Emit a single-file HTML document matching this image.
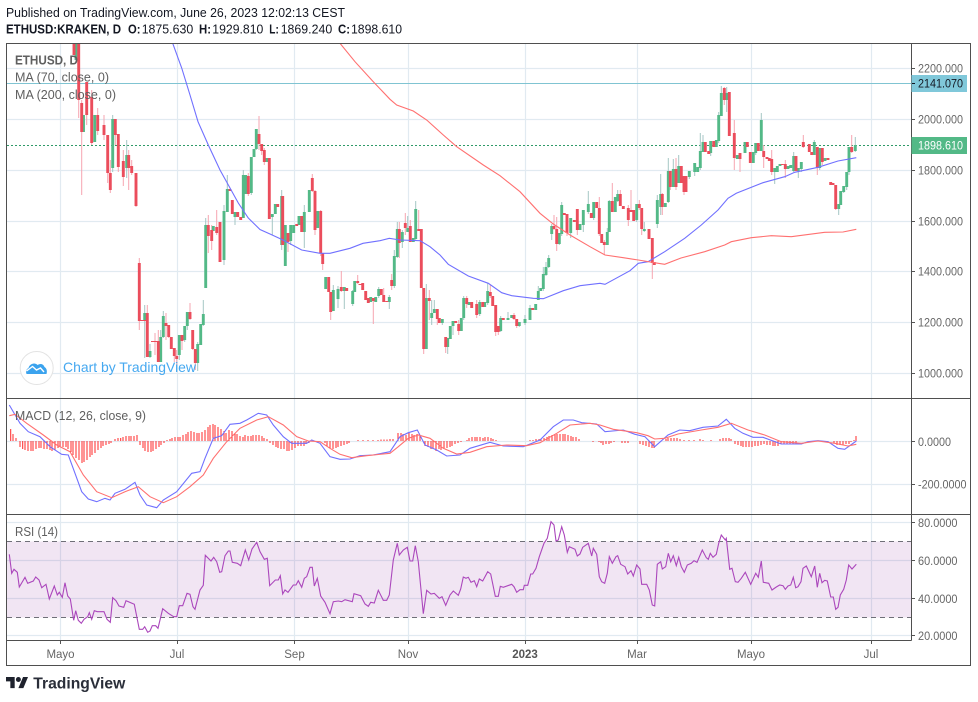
<!DOCTYPE html>
<html><head><meta charset="utf-8"><style>html,body{margin:0;padding:0;background:#fff}svg{display:block}text{font-family:"Liberation Sans",sans-serif}</style></head><body>
<svg width="978" height="702" viewBox="0 0 978 702" xmlns="http://www.w3.org/2000/svg">
<defs>
<clipPath id="p"><rect x="7" y="44" width="904" height="354"/></clipPath>
<clipPath id="m"><rect x="7" y="399" width="904" height="115"/></clipPath>
<clipPath id="r"><rect x="7" y="515" width="904" height="125"/></clipPath>
<clipPath id="a"><rect x="912" y="515" width="58" height="125"/></clipPath>
</defs>
<rect width="978" height="702" fill="#fff"/>
<text x="6" y="17" font-size="12.5" fill="#131722" textLength="339" lengthAdjust="spacingAndGlyphs">Published on TradingView.com, June 26, 2023 12:02:13 CEST</text>
<g font-size="12.5" fill="#131722">
<text x="6" y="33.5" font-weight="bold" textLength="115" lengthAdjust="spacingAndGlyphs">ETHUSD:KRAKEN, D</text>
<text x="128" y="33.5" font-weight="bold" textLength="12.5" lengthAdjust="spacingAndGlyphs">O:</text>
<text x="141.7" y="33.5" textLength="51.5" lengthAdjust="spacingAndGlyphs">1875.630</text>
<text x="199" y="33.5" font-weight="bold" textLength="12" lengthAdjust="spacingAndGlyphs">H:</text>
<text x="212.3" y="33.5" textLength="51" lengthAdjust="spacingAndGlyphs">1929.810</text>
<text x="269.3" y="33.5" font-weight="bold" textLength="9.5" lengthAdjust="spacingAndGlyphs">L:</text>
<text x="280.7" y="33.5" textLength="51.5" lengthAdjust="spacingAndGlyphs">1869.240</text>
<text x="338" y="33.5" font-weight="bold" textLength="12" lengthAdjust="spacingAndGlyphs">C:</text>
<text x="351" y="33.5" textLength="51" lengthAdjust="spacingAndGlyphs">1898.610</text>
</g>
<!-- grids -->
<path d="M60.5 44V640M177.5 44V640M294.5 44V640M408.5 44V640M525.5 44V640M637.5 44V640M751.5 44V640M871.5 44V640" stroke="#e1eaf1" stroke-width="1.2" fill="none"/>
<path d="M7 68.5H911M7 119.5H911M7 170.5H911M7 221.5H911M7 271.5H911M7 322.5H911M7 373.5H911M7 441.5H911M7 484.5H911M7 522.5H911M7 560.5H911M7 598.5H911M7 635.5H911" stroke="#e1eaf1" stroke-width="1.2" fill="none"/>
<path d="M7 83.5H911" stroke="#80c4d2" stroke-width="1"/>
<path d="M7 145.5H911" stroke="#2f9a68" stroke-width="1" stroke-dasharray="2 2"/>
<g clip-path="url(#p)" fill="none">
<path stroke="#a5c6c4" stroke-width="1" d="M112.7 115V172M126.7 140V178M144.7 305V358M150 344V358M160.7 330V362M163.3 311V338M179.3 335V360M184.7 326V342M187.3 312V330M197.7 342V371M200.7 324V345M203.3 300V326M205.7 218V288M224 205V265M227.3 175V212M235 212V225M243.3 170V218M251.3 157V195M256.3 129V150M272.3 214V235M281.7 190V250M285.3 225V266M290.7 225V245M304.3 205V248M309.3 190V212M333.3 285V311M338 286V308M344.3 287V309M352.7 290V306M378.7 287V298M389.3 295V309M394.3 250V288M397.3 222V258M402.3 230V248M407.7 216V230M415.7 201V240M426.3 284V349M431.7 300V325M434.3 300V313M442.3 319V325M447.7 338V354M453 321V335M463.7 296V320M479.7 300V316M487.7 283V305M500.7 316V332M508 312V320M519.3 322V327M525 315V325M530 305V320M538.3 286V300M543.3 267V291M546 262V276M548.7 255V268M551.7 224V240M559.3 233V245M561.7 202V236M570.7 218V238M583.3 210V232M588.3 191V214M593.7 202V220M607.3 228V245M609.3 200V232M615.3 197V212M617.7 190V202M636.7 204V222M644.3 222V232M657.3 195V228M660.7 174V215M668.3 158V203M673.3 159V187M678.7 155V183M689.3 171V179M694.7 163V176M700.3 133V170M703 135V152M710.7 141V156M718.7 112V143M721.3 86V116M726.7 87V112M755.7 143V155M761.3 113V151M774.7 168V184M793.7 152V172M798.3 171V178M801.3 162V172M814.3 140V155M819.7 148V170M838.7 204V215M840.7 191V205M843.7 186V193M846.7 172V190M849 147V175M855.3 137V152"/>
<path stroke="#f6a5b0" stroke-width="1" d="M78.7 60V118M81.7 100V195M86.7 82V125M91.7 90V145M97.7 108V135M104 115V140M107.7 135V183M110.3 160V193M115.3 119V145M118.3 134V172M123.3 150V186M128.7 150V190M131.7 160V175M136 173V207M139.3 258V330M147.3 305V357M155 333V355M158.3 330V362M166 313V340M168.7 325V338M174.3 348V362M176.7 350V365M182 335V350M190 303V320M192.7 330V350M195.3 349V370M208.3 215V253M211.7 225V250M216.7 210V235M220 222V262M248.3 173V196M259 116V150M261.7 144V155M264.3 148V165M269.3 158V219M288 233V252M301.7 216V230M312.3 174V192M315 190V235M320.7 210V256M322.7 253V270M330.7 292V320M341.3 271V292M357.7 275V284M373.3 298V324M383.7 288V302M391.7 274V290M399.3 222V258M405.3 213V235M410.3 220V242M418.7 210V230M421.3 229V288M423.7 288V354M429.3 290V320M437.3 309V325M445.7 337V353M458.7 320V335M466.7 296V308M476.7 300V318M490.3 285V298M495.7 305V336M498.3 326V335M514 313V320M516.7 319V328M554 215V230M556.7 217V251M567 214V236M577.3 209V235M599.3 197V236M604.3 240V255M612.3 183V212M620.3 190V206M628.3 205V226M631 190V212M639.3 200V210M641.7 208V235M649 229V239M652.3 238V279M662.3 193V215M670.3 171V190M676 158V190M684 176V195M724.3 87V105M729.3 92V136M734.3 120V170M740 153V172M763.7 145V168M771.7 150V175M785.3 160V178M803.3 135V148M817.3 147V175M822.3 148V165M835.7 185V210M851.7 135V153"/>
<path stroke="#53b987" stroke-width="2.9" d="M76 43V60M83.5 115V132M94.7 115V142M112.7 119V168M126.7 155V168M144.7 313V321M150 351V357M160.7 337V362M163.3 316V337M179.3 335V355M184.7 326V340M187.3 312V326M197.7 344V363M200.7 324V345M203.3 314V325M205.7 225V288M213.3 226V231M224 211V260M227.3 189V212M235 212V217M243.3 175V218M245.7 175V194M251.3 157V193M254 149V157M256.3 129V149M266.7 158V162M272.3 214V217M275.3 204V214M281.7 196V245M285.3 225V266M290.7 225V241M293.7 225V233M299 216V225M304.3 212V232M309.3 190V212M317.7 211V228M325.7 277V289M333.3 290V311M338 289V299M344.3 287V291M352.7 291V304M354.7 281V292M370.7 297V302M375.7 297V302M378.7 289V296M389.3 297V302M394.3 256V286M397.3 229V257M402.3 232V242M407.7 228V232M413.3 238V242M415.7 209V239M426.3 298V349M431.7 313V318M434.3 309V313M442.3 319V323M447.7 338V347M450.3 326V339M453 321V326M461.3 318V331M463.7 298V318M469 302V305M479.7 302V314M484.7 302V307M487.7 291V303M500.7 318V331M508 318V320M511.7 315V318M519.3 322V326M525 319V323M530 308V320M535.7 304V310M538.3 291V300M540.7 288V291M543.3 274V289M546 267V275M548.7 258V267M551.7 226V234M559.3 233V244M561.7 205V234M570.7 218V233M580 224V230M583.3 210V225M588.3 204V212M593.7 202V218M607.3 232V245M609.3 201V232M615.3 197V212M617.7 194V201M636.7 204V220M644.3 229V231M657.3 200V224M660.7 194V207M665.3 203V207M668.3 171V202M673.3 169V187M678.7 166V183M689.3 171V177M694.7 163V172M697.7 167V172M700.3 151V168M703 142V152M710.7 141V153M716.3 140V147M718.7 115V141M721.3 93V116M726.7 93V100M737.3 155V159M745 142V153M753.3 152V163M755.7 143V153M761.3 120V151M774.7 168V172M777.3 166V172M780 164V166M788 166V169M790.7 165V168M793.7 156V171M798.3 168V171M801.3 162V169M814.3 142V155M819.7 148V168M825 158V161M838.7 204V209M840.7 191V205M843.7 186V192M846.7 172V187M849 147V172M855.3 145V151"/>
<path stroke="#eb4d5c" stroke-width="2.9" d="M74 43V55M78.7 43V100M81.7 103V132M86.7 82V115M91.7 97V143M97.7 115V131M104 125V135M107.7 135V173M110.3 173V190M115.3 119V135M118.3 134V167M123.3 161V177M128.7 155V168M131.7 166V173M136 173V206M139.3 263V321M147.3 313V357M158.3 341V362M166 323V326M168.7 325V337M171.3 337V349M174.3 348V356M176.7 356V359M182 335V341M190 312V319M192.7 330V349M195.3 349V363M208.3 225V236M211.7 230V241M216.7 227V233M220 222V262M230 189V191M232.3 200V214M237.7 212V217M240.7 217V220M248.3 176V194M259 134V144M261.7 144V151M264.3 150V162M269.3 158V219M277.7 204V207M282.7 196V245M288 233V242M296.7 224V226M301.7 216V232M312.3 178V191M315 191V230M320.7 211V253M322.7 253V264M328.7 277V292M330.7 292V312M341.3 287V291M346.7 288V291M357.7 281V283M360 284V285M362.7 283V290M365.7 291V300M368.3 298V303M373.3 298V301M381.3 289V295M383.7 295V302M386.7 301V302M391.7 280V286M399.3 229V243M405.3 223V228M410.3 226V242M418.7 229V231M421.3 229V288M423.7 288V349M429.3 298V301M437.3 309V319M439.3 318V323M445.7 337V347M455.7 321V323M458.7 324V331M466.7 298V304M471.7 302V308M476.7 304V315M482.7 302V307M490.3 292V296M492.7 296V306M495.7 305V332M498.3 326V332M503.3 318V320M514 315V319M516.7 319V326M532.7 308V310M554 226V229M556.7 229V244M564.3 213V215M567 214V233M574.3 220V222M577.3 209V230M591.3 213V218M596.7 202V208M599.3 208V234M601.7 234V243M604.3 242V245M612.3 201V212M620.3 194V206M623.3 206V209M628.3 208V220M631 210V212M633.7 210V221M639.3 204V208M641.7 208V229M649 229V239M652.3 238V263M654.3 262V265M662.3 194V207M670.3 171V187M676 169V187M681.3 166V183M684 176V192M686 176V192M705.3 142V152M708.7 151V154M713.7 141V147M724.3 88V100M729.3 92V136M734.3 133V158M740 153V159M747.3 142V147M750.3 152V163M758.3 143V151M763.7 151V157M767 157V159M769.3 158V161M771.7 159V172M782.3 164V165M785.3 164V169M796 156V171M803.3 142V147M809.3 144V152M811.7 152V155M817.3 147V168M822.3 148V162M828 158V160M830.7 182V185M833 183V185M835.7 185V209M851.7 147V152"/>
<path stroke="#eb4d5c" stroke-width="1" d="M139 320.5H146M151 341.5H158"/>
<polyline stroke="#7070ff" stroke-width="1.1" points="172.7,43.3 181.7,68 190,95 198,121.7 208.3,145 220,170 230,188 238.3,203 248.3,218 260,229.5 270,234 283,240 301.7,250 320,253.3 330,253.3 350,248.3 363,243.3 380,240.7 389.3,238.3 400,240 420,240.7 430,246.7 440,255 448.3,264.3 468.3,276 488.3,283.3 501.7,292.7 511.7,295.7 533.3,298.3 543.3,298.7 563.3,290.7 580,285.7 600,283.3 605,284.3 630,270.7 638.3,263.3 648,261.7 664.7,251.7 684.7,238.3 701.3,225 718,210 728,198.3 736.3,193.3 763,182.7 784.7,176.7 794.7,172.3 818,167.3 838,161 856.3,157.7"/>
<polyline stroke="#ff7070" stroke-width="1.1" points="340,43.3 355,61.7 373.3,81.7 390,99.3 396.7,105 413.3,111 426.7,120 443.3,135 456.7,146.7 483.3,165 500,175.7 520,191.7 540,213.3 553.3,224 570,235 590,246.7 605,255 623.3,257.7 638.3,260 658.3,263.3 664.7,264.3 681,258 704.7,251.7 724.7,245 731.3,241.7 751.3,237.7 771.3,235.7 791.3,236.7 824.7,232.3 843,232 856.3,229.3"/>
</g>
<g clip-path="url(#m)" fill="none">
<path stroke="#ff2a2a" stroke-width="1" d="M10.7 441V429M13 441V434M16 441V438M20 441V447M22.7 441V449M25 441V450M28 441V451M31 441V451M33 441V451M36 441V449M39 441V448M41 441V448M44 441V449M47 441V449M50 441V450M52 441V451M55 441V450M58 441V448M60 441V447M63 441V447M66 441V447M68 441V449M71 441V452M73 441V455M76 441V458M79 441V460M82 441V463M84 441V462M87 441V460M90 441V457M92 441V455M95 441V453M98 441V450M101 441V448M103 441V446M106 441V445M109 441V444M111 441V443M115 441V439M118 441V438M120.7 441V438M123 441V437M126 441V436M129 441V436M131 441V436M134 441V436M137 441V435M140 441V445M143 441V448M145 441V451M148 441V452M151 441V452M153 441V451M156 441V449M159 441V447M161 441V445M164 441V443M167 441V440M170 441V439M172 441V438M175 441V437M178 441V437M180 441V437M183 441V435M186 441V434M188 441V432M191 441V431M194 441V432M197 441V433M199 441V433M202 441V432M205 441V430M208 441V427M210 441V425M213 441V424M215 441V425M218 441V427M221 441V429M224 441V431M226 441V433M229 441V430M232 441V431M235 441V433M237 441V434M240 441V436M243 441V437M245 441V435M248 441V436M251 441V436M253 441V435M256 441V435M259 441V435M262 441V436M264 441V438M267 441V439M270 441V443M273 441V445M276 441V447M278 441V448M281 441V449M284 441V449M287 441V451M289 441V451M292 441V450M295 441V448M298 441V446M301 441V446M304 441V446M306 441V444M309 441V443M325 441V443M327 441V446M330 441V448M333 441V449M336 441V448M338 441V447M341 441V446M344 441V445M347 441V444M349 441V443M358 441V440M363 441V440M368 441V440M373 441V440M378 441V440M381 441V439.5M384 441V439.5M387 441V439.5M390 441V439M393 441V439M398 441V433M401 441V433M403 441V434M406 441V435M409 441V433M412 441V434M414 441V435M417 441V434M420 441V436M425 441V446M428 441V447M431 441V449M433 441V449M436 441V451M439 441V449M441 441V450M444 441V449M447 441V448M450 441V447M452 441V446M455 441V444M458 441V443M461 441V442M467 441V440M469 441V438M472 441V437M475 441V437M477 441V437M480 441V437M483 441V438M485 441V437M488 441V437M491 441V438M493 441V439M496 441V440M530 441V440M533 441V440M536 441V439M539 441V439M541 441V439M544 441V438M547 441V437M549 441V436M552 441V435M555 441V434M557 441V434M560 441V434M563 441V434M565 441V434M568 441V435M571 441V436M573 441V437M576 441V437M579 441V439M593 441V442M599 441V442M601 441V443M603 441V445M606 441V444M609 441V444M611 441V443M614 441V442M622 441V443M625 441V443M628 441V443M640 441V444M643 441V445M646 441V446M649 441V447M652 441V448M654 441V448M666 441V439M668 441V438M671 441V438M674 441V438M677 441V438M680 441V439M684 441V440M689 441V440M694 441V440M700 441V439M703 441V440M711 441V440M720 441V439M723 441V438M726 441V438M729 441V438M731 441V439M735 441V444M738 441V445M741 441V446M743 441V447M746 441V447M749 441V447M752 441V447M755 441V446M758 441V446M761 441V445M764 441V444M767 441V445M770 441V445M773 441V446M775 441V446M778 441V446M781 441V444M784 441V444M787 441V444M790 441V444M793 441V444M796 441V444M834 441V443M837 441V445M840 441V445M843 441V445M846 441V444M849 441V444M851 441V442M854 441V440M856 441V436"/>
<polyline stroke="#7070ff" stroke-width="1.1" points="9.3,405 20,423.3 28.3,431.7 40,436.7 50,446.7 61.7,454.3 68.3,455 75,473.3 81.7,491.7 88.3,499 96.7,501.7 105,498.3 110,500 115,493.3 125,489.3 135,482.3 140,495 146.7,505 156.7,507.7 163.3,500 176.7,491.7 191.7,473.3 200,471.7 205,458.3 213.3,438.3 221.7,435.7 230,424.3 240,423.3 246.7,420 258.3,413.3 266.7,415 273.3,425 283.3,436.7 291.7,443.3 306.7,443.3 311.7,440 320,443.3 330,456.7 340,459.3 350,459 360,455.7 373,455 390,451.7 400,436.7 408.3,432.7 417.3,430 425,445 436.7,450 446.7,456 460,455 470,448.3 490,442.3 503.3,446 523.3,446.7 540,440 553.3,426.7 563.3,420 573.3,420 581.7,422.7 596.7,424 605,431.7 623.3,430 635,434.3 645,436.7 654.7,446.7 668,435 679.7,430 689.7,430.7 703,427.3 718,426 726.3,419.3 734.7,428.3 743,433.3 753,437.3 763,437.3 781.3,444 801.3,444 808,441.7 818,440.7 828,441.7 838,448.3 844.7,449.3 856.3,441"/>
<polyline stroke="#ff7070" stroke-width="1.1" points="9.3,415.7 15,414.3 26.7,423.3 43.3,435 56.7,445 70,451.7 83.3,475 96.7,491.7 111.7,497.7 125,491.7 138.3,486.7 150,496.7 163.3,502.7 176.7,496.7 190,486.7 203.3,475 213.3,458.3 226.7,441.7 240,428.3 256.7,420 268.3,416.7 283.3,425 296.7,436.7 308.3,441 320,441.7 330,448.3 340,454.3 351.7,457.7 366.7,455.7 390,453.3 398.3,446.7 408.3,438.3 418.3,435 430,438.3 443.3,448.3 456.7,454 470,452.3 486.7,446.7 506.7,445 526.7,445.7 540,442.7 556.7,433.3 570,425 590,423.3 600,425 613.3,429.3 636.7,432.7 648,435.7 654.7,439 664.7,438.3 678,434 701.3,430 718,427.3 731.3,423.3 748,430 764.7,435 781.3,441.7 801.3,443.3 818,441 834.7,443.3 848,446 856.3,444.3"/>
</g>
<g clip-path="url(#r)" fill="none">
<rect x="7" y="541.5" width="904" height="76" fill="#8e2a9e" opacity="0.12"/>
<path d="M7 541.5H911M7 617.5H911" stroke="#6f6f78" stroke-width="1" stroke-dasharray="5 4"/>
<polyline stroke="#ab47bc" stroke-width="1.1" points="9.3,554.3 11.7,573.3 14,569.3 17.3,572.3 19.3,587 25,577.3 27.7,583.3 33.3,581 35.7,577 39,580 41.7,587.7 46,584.3 49.3,599 54.3,586 57.3,595 59.3,592.3 62.3,597.3 65,582.7 67.7,596 70.3,599 73.7,620.3 75.7,610.7 78.3,620.3 81.3,623.3 84,619.3 87.7,616.7 89.3,612.7 91.7,619.3 94.3,610.7 97.3,611.7 104,611.7 107,619.3 110.3,622.3 112.7,597.7 116,600.7 119,606 123.7,607.3 126,600.7 134.3,604.3 139.3,629.3 142.7,629.3 144.7,626.7 147.7,632.3 150,631 152.3,625.7 155.7,625.7 158,628.3 162.7,608.7 168.3,613.3 173.7,616.7 176.7,616.7 179.3,605.7 182.7,605.7 187,593.3 190,594.3 193,606.7 195,609.3 200,590 203.3,585.3 205.3,555.3 211,561 213.7,557.3 216.7,561.7 219.7,572.3 221.7,571.7 225,555.7 228.3,551 230,551 232.3,562.3 237.3,563.3 240.7,565.7 245.3,550 248.7,560 252,549 256.7,542.3 260,551.7 264.3,559.3 267.3,558.3 269.7,585.7 275.3,580 278.3,580 280.3,575.7 282.7,594 285,590 288,592.3 293.3,585 296,585 298.3,580.7 301.7,587.3 304.3,578.3 306.7,576.7 310,567.3 312.3,567.3 314.3,586 317.3,578.3 320.7,596 325,602.3 330,613.7 333.3,601.7 338.3,601 341.7,601.7 345,599.7 352.3,601.7 354,593.7 360.7,595.7 365,604 368.3,606.3 370.7,602.3 374.3,603 378.3,590.3 383.3,600.3 386.7,600.3 389.3,595 393.3,560 397.3,543.3 399.3,555 403.3,550 407.3,547.3 410,561 412.7,561 415.3,545.7 418.3,561.7 423.3,613.7 426.7,590.3 431,594 434.3,593.3 439.3,598.3 442,596.7 445.7,605.3 450,595 453.3,591 458.3,595.3 460.7,589 463.3,577 466,578.3 468.3,577.3 471,582.3 474.3,580.7 476.7,586.7 479.3,579 482.7,581 487.7,571.7 490.7,574 495.3,596.3 498.3,596.3 500.3,586.3 503.3,587.3 511.7,584.3 514,586.7 516.7,592.3 520,589.7 523.3,589.7 524.3,585.3 527.7,585.3 530.7,574 532.7,574 536,568.3 539.3,556.7 544,543.3 547.3,538.3 551,521.7 554,525 556,541 558.3,540 561.7,526.7 564.3,535 567.3,552.3 569.3,546.7 575,549.3 577.3,556 580,554 582.7,547.3 588.3,543.3 591.7,556 593.3,548.3 596.7,554.3 599.3,576.7 601.7,581.7 604.7,583.3 607.3,573.3 609.3,556.7 612.3,563.3 616,556.7 617.7,555.7 620.7,564.3 625,566.7 627.7,574 631,570.7 633.3,576 636.7,565 640,569 641.7,584.3 646.7,584.3 649.3,590 652.3,605 654.7,606 657.3,564.3 660.7,561.7 662.3,569 665.7,566.7 668.3,553.3 670.7,561.7 673.3,555.7 676.3,565.7 678.7,557.3 681.3,566.7 684.3,572.3 687.3,565 691.3,563.3 694,560.7 697,562.3 702.3,550 706.3,557.7 708.3,559.3 710.3,553.3 713,557.3 716.3,554.3 718.7,543.3 721.3,535 725.3,540 726.3,538.3 729.7,569.3 732,568.3 735.3,581.7 738,582.3 741.3,578.3 745.3,572.3 750.7,584.3 755.7,573.3 758.3,577.3 761.3,561 763.3,582.3 768.7,583.3 772,590 776.3,587 779.7,585 783,585.7 785.3,589.3 788,586 790.7,585 793.3,577.3 795.7,587.7 798,586.7 801,581.7 803,568.3 806.3,566 811.3,576.7 814.7,566 817.3,587.3 819.7,573.3 822,582.7 824.7,580.3 827.3,581 830.7,597 833.3,597 835.7,609.3 838,607.3 840.3,595 843.7,589.3 846.3,580 848.7,565 852,569 856.3,564.3"/>
</g>
<!-- frame -->
<path d="M6.5 43.5H970.5V665.5H6.5ZM6.5 398.5H970.5M6.5 514.5H970.5M6.5 640.5H911.5M911.5 43.5V640.5" fill="none" stroke="#4f4f4f" stroke-width="1"/>
<path d="M912 68.5h3M912 119.5h3M912 170.5h3M912 221.5h3M912 271.5h3M912 322.5h3M912 373.5h3M912 441.5h3M912 484.5h3M912 522.5h3M912 560.5h3M912 598.5h3M912 635.5h3M60.5 641v3M177.5 641v3M294.5 641v3M408.5 641v3M525.5 641v3M637.5 641v3M751.5 641v3M871.5 641v3" stroke="#555" stroke-width="1"/>
<!-- axis labels -->
<g font-size="11.5" fill="#666">
<text x="918" y="72.5" textLength="45" lengthAdjust="spacingAndGlyphs">2200.000</text>
<text x="918" y="123.5" textLength="45" lengthAdjust="spacingAndGlyphs">2000.000</text>
<text x="918" y="174.5" textLength="45" lengthAdjust="spacingAndGlyphs">1800.000</text>
<text x="918" y="225.5" textLength="45" lengthAdjust="spacingAndGlyphs">1600.000</text>
<text x="918" y="275.5" textLength="45" lengthAdjust="spacingAndGlyphs">1400.000</text>
<text x="918" y="326.5" textLength="45" lengthAdjust="spacingAndGlyphs">1200.000</text>
<text x="918" y="377.5" textLength="45" lengthAdjust="spacingAndGlyphs">1000.000</text>
<text x="918" y="446" textLength="33" lengthAdjust="spacingAndGlyphs">0.0000</text>
<text x="918" y="488.5" textLength="48.5" lengthAdjust="spacingAndGlyphs">-200.0000</text>
<text x="918" y="527" textLength="39.5" lengthAdjust="spacingAndGlyphs">80.0000</text>
<text x="918" y="565" textLength="39.5" lengthAdjust="spacingAndGlyphs">60.0000</text>
<text x="918" y="603" textLength="39.5" lengthAdjust="spacingAndGlyphs">40.0000</text>
<text x="918" y="640" clip-path="url(#a)" textLength="39.5" lengthAdjust="spacingAndGlyphs">20.0000</text>
</g>
<rect x="911.5" y="75" width="55.5" height="17" fill="#80c8da"/>
<path d="M912 83.5h3" stroke="#131722"/>
<text x="918" y="87.5" font-size="11.5" fill="#131722" textLength="45" lengthAdjust="spacingAndGlyphs">2141.070</text>
<rect x="911.5" y="137" width="55.5" height="17" fill="#53b987"/>
<text x="918" y="149.5" font-size="11.5" fill="#fff" textLength="45" lengthAdjust="spacingAndGlyphs">1898.610</text>
<g font-size="11.5" fill="#666" text-anchor="middle">
<text x="60.5" y="658">Mayo</text>
<text x="177" y="658">Jul</text>
<text x="294.5" y="658">Sep</text>
<text x="408" y="658">Nov</text>
<text x="525" y="658" font-weight="bold" fill="#555">2023</text>
<text x="637" y="658">Mar</text>
<text x="751" y="658">Mayo</text>
<text x="871" y="658">Jul</text>
</g>
<!-- legends -->
<g font-size="13" fill="#5f5f5f">
<text x="15" y="64.5" font-weight="bold" textLength="63" lengthAdjust="spacingAndGlyphs">ETHUSD, D</text>
<text x="15" y="81.5" textLength="94" lengthAdjust="spacingAndGlyphs">MA (70, close, 0)</text>
<text x="15" y="99" textLength="101" lengthAdjust="spacingAndGlyphs">MA (200, close, 0)</text>
<text x="15" y="420" textLength="131" lengthAdjust="spacingAndGlyphs">MACD (12, 26, close, 9)</text>
<text x="15" y="536" textLength="43" lengthAdjust="spacingAndGlyphs">RSI (14)</text>
</g>
<!-- watermark -->
<circle cx="36.7" cy="368" r="16.5" fill="#fff" stroke="#e3e3e3" stroke-width="1"/>
<path d="M26.5 374c-1-3 0-5 2-6 1-4 6-6 9-3 3-2 6-1 7 2 2 1 3 4 2 7z" fill="#3ba3ee"/>
<path d="M26.5 371l6-4.5 4 3.5 4-2 3.5 4" fill="none" stroke="#fff" stroke-width="1.4"/>
<text x="63" y="372" font-size="14" fill="#45a8f0" textLength="133" lengthAdjust="spacingAndGlyphs">Chart by TradingView</text>
<!-- logo -->
<g transform="translate(6,674.5) scale(.62)" fill="#1e222d"><path d="M14 22H7V11H0V4h14v18zM28 22h-8l7.5-18h8L28 22z"/><circle cx="20" cy="8" r="4"/></g>
<text x="33.3" y="688.5" font-size="15.5" font-weight="bold" fill="#2a2e39" textLength="92" lengthAdjust="spacingAndGlyphs">TradingView</text>
</svg>
</body></html>
